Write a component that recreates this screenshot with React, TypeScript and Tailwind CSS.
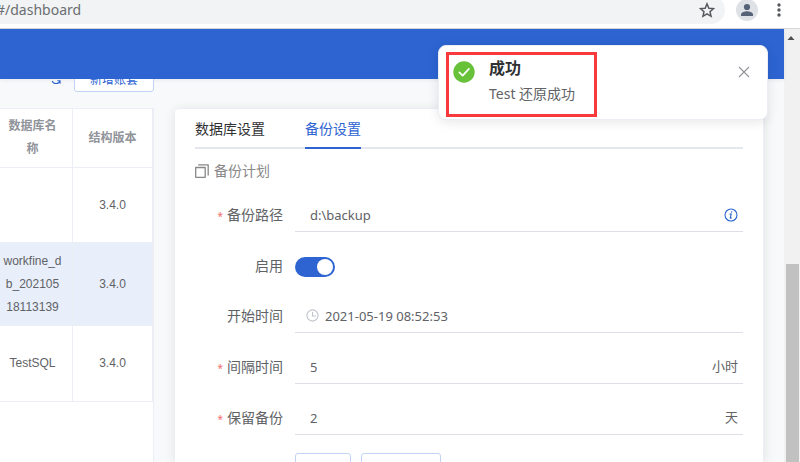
import type { ReactNode } from "react";

const rows = [
  { name: "", version: "3.4.0", rowClass: "h-[75px] bg-white" },
  { name: "workfine_db_20210518113139", version: "3.4.0", rowClass: "h-[83px] bg-[#e8effa]" },
  { name: "TestSQL", version: "3.4.0", rowClass: "h-[76px] bg-white" },
];

const BrowserBar = () => (
  <div className="h-[29px] shrink-0 overflow-hidden border-b border-[#d5d7da] bg-white">
    <div className="-mt-1 flex h-7 items-center">
      <div className="flex h-7 min-w-0 flex-1 items-center justify-between rounded-r-full bg-[#f1f3f4] pr-2.5">
        <span className="-ml-1 text-sm leading-5 text-[#6b6e72]">#/dashboard</span>
        <button aria-label="Bookmark" className="block">
          <svg viewBox="0 0 24 24" className="h-4 w-4" fill="none" stroke="#55585d" strokeWidth="2.2">
            <path d="M12 2.8l2.8 6.5 7 .6-5.3 4.6 1.6 6.9L12 17.700l-6.100 3.700 1.600-6.900L2.200 9.900l7-.6z" />
          </svg>
        </button>
      </div>
      <button aria-label="Profile" className="ml-[11px] h-[22px] w-[22px] rounded-full bg-[#dee1e6]">
        <svg viewBox="0 0 22 22" className="h-[22px] w-[22px]" fill="#566277">
          <circle cx="11" cy="8" r="3.1" />
          <path d="M5 17v-1.500c0-2.300 4-3.300 6-3.300s6 1 6 3.300V17z" />
        </svg>
      </button>
      <button aria-label="Menu" className="mr-[13px] ml-[13px] h-4 w-4">
        <svg viewBox="0 0 16 16" className="h-4 w-4" fill="#55585d">
          <circle cx="8" cy="3" r="1.700" />
          <circle cx="8" cy="8" r="1.700" />
          <circle cx="8" cy="13" r="1.700" />
        </svg>
      </button>
    </div>
  </div>
);

const DatabaseList = () => (
  <div className="flex w-[154px] shrink-0 flex-col">
    {/* toolbar is scrolled partly under the header */}
    <div className="flex h-[13px] shrink-0 items-end justify-end gap-3 overflow-hidden">
      <button aria-label="刷新" className="flex h-[26px] items-center">
        <svg viewBox="0 0 14 14" className="h-3 w-3" fill="none" stroke="#2d64d2" strokeWidth="1.200">
          <path d="M2.200 5a5 5 0 0 1 9.300-.4M11.800 9a5 5 0 0 1-9.300.4M2.200 1.500v3.500h3.200M11.800 12.500V9H8.600" />
        </svg>
      </button>
      <button className="h-[26px] w-20 rounded-[3px] border border-[#c3d3f3] bg-white pt-0.5 text-xs text-[#2d64d2]">
        新增账套
      </button>
    </div>
    <div className="mt-4 flex flex-1 items-start justify-end overflow-hidden border-t border-r border-[#ebeef5] bg-white">
      <table className="w-40 shrink-0 table-fixed border-separate border-spacing-0 text-center font-['Liberation_Sans','Noto_Sans_CJK_SC',sans-serif] text-xs leading-[23px] text-[#606266]">
        <thead>
          <tr className="h-[59px] text-[#909399]">
            <th className="w-20 border-r border-b border-[#ebeef5] px-2.5 font-bold">数据库名称</th>
            <th className="w-20 border-r border-b border-[#ebeef5] px-2.5 font-bold">结构版本</th>
          </tr>
        </thead>
        <tbody>
          {rows.map((row, index) => (
            <tr key={index} className={row.rowClass}>
              <td className="border-r border-b border-[#ebeef5] px-2.5 break-all">{row.name}</td>
              <td className="border-r border-b border-[#ebeef5] px-2.5">{row.version}</td>
            </tr>
          ))}
        </tbody>
      </table>
    </div>
  </div>
);

type FieldProps = {
  id: string;
  label: string;
  value: string;
  required?: boolean;
  prefix?: ReactNode;
  suffix?: ReactNode;
};

const FieldLabel = ({ id, label, required }: { id: string; label: string; required?: boolean }) => (
  <label htmlFor={id} className="w-[88px] shrink-0 text-right text-sm leading-[30px] text-[#606266]">
    {required && <span className="mr-1 text-[10px] text-[#f56c6c]">*</span>}
    {label}
  </label>
);

const Field = ({ id, label, value, required, prefix, suffix }: FieldProps) => (
  <div className="flex h-8 gap-3">
    <FieldLabel id={id} label={label} required={required} />
    <div className="flex min-w-0 flex-1 items-center border-b border-[#dcdfe6] pb-0.5">
      {prefix}
      <input
        id={id}
        defaultValue={value}
        className={`h-full min-w-0 flex-1 bg-transparent text-[13px] text-[#606266] outline-none ${prefix ? "pl-1.5" : "pl-[15px]"}`}
      />
      <span className="pr-[5px] text-[13px] text-[#606266]">{suffix}</span>
    </div>
  </div>
);

const ClockIcon = () => (
  <svg viewBox="0 0 14 14" className="ml-[11px] h-[13px] w-[13px]" fill="none" stroke="#c0c4cc" strokeWidth="1.200">
    <circle cx="7" cy="7" r="6" />
    <path d="M7 3.200v4.300h3.500" />
  </svg>
);

const InfoIcon = () => (
  <svg viewBox="0 0 14 14" className="h-3.5 w-3.5" fill="none" stroke="#2d64d2" strokeWidth="1.100">
    <circle cx="7" cy="7" r="6" />
    <path d="M5.600 6.100h1.600l-.9 3.800c-.1.600.600.600 1.500-.3" />
    <circle cx="7.700" cy="3.900" r=".5" fill="#2d64d2" strokeWidth=".4" />
  </svg>
);

const SettingsPanel = () => (
  <section className="min-w-0 flex-1 self-stretch rounded-t border-t border-r border-[#ebeef5] bg-white px-5 shadow-[0_2px_12px_0_rgba(0,0,0,0.1)]">
    <div role="tablist" className="flex h-10 items-stretch gap-10 border-b-2 border-[#e4e7ed] text-sm">
      <button role="tab" aria-selected="false" className="pt-0.5 text-[#303133]">
        数据库设置
      </button>
      <button role="tab" aria-selected="true" className="-mb-0.5 border-b-2 border-[#2d64d2] pt-0.5 text-[#2d64d2]">
        备份设置
      </button>
    </div>
    <h3 className="mt-3 flex h-5 items-center gap-[5px] text-sm text-[#888888]">
      <svg viewBox="0 0 14 14" className="h-3.5 w-3.5" fill="none" stroke="#888888" strokeWidth="1.300" strokeLinejoin="round">
        <path d="M.7 3.500h9.500v9.800H.7zM3.200.8h10v10.600" />
      </svg>
      备份计划
    </h3>
    <form className="mt-[19px]">
      <div className="flex flex-col gap-[19px]">
        <Field id="path" label="备份路径" value="d:\backup" required suffix={<InfoIcon />} />
        <div className="flex h-[31px] gap-3">
          <FieldLabel id="enabled" label="启用" />
          <input
            id="enabled"
            type="checkbox"
            role="switch"
            defaultChecked
            className="flex h-5 w-10 appearance-none items-center self-center rounded-full bg-[#c0c4cc] px-0.5 before:block before:h-4 before:w-4 before:rounded-full before:bg-white checked:justify-end checked:bg-[#2d64d2]"
          />
        </div>
        <Field id="start" label="开始时间" value="2021-05-19 08:52:53" prefix={<ClockIcon />} />
        <Field id="interval" label="间隔时间" value="5" required suffix="小时" />
        <Field id="keep" label="保留备份" value="2" required suffix="天" />
      </div>
      <div className="mt-[18px] flex gap-2.5 pl-[100px]">
        <button type="button" aria-label="保存" className="h-7 w-14 rounded-[3px] border border-[#c3d3f3] bg-white" />
        <button type="button" aria-label="立即备份" className="h-7 w-20 rounded-[3px] border border-[#c3d3f3] bg-white" />
      </div>
    </form>
  </section>
);

const Notification = () => (
  <div
    role="alert"
    className="absolute top-4 right-4 flex h-[75px] w-[330px] rounded-lg border border-[#ebeef5] bg-white pt-3 pr-[17px] pl-3.5 shadow-[0_2px_12px_0_rgba(0,0,0,0.1)]"
  >
    <svg viewBox="0 0 22 22" className="mt-[3px] h-[22px] w-[22px] shrink-0">
      <circle cx="11" cy="11" r="10.700" fill="#67c23a" />
      <path d="M6.300 11.300l3.400 3.300 6.200-6.700" fill="none" stroke="#ffffff" strokeWidth="1.700" strokeLinecap="round" strokeLinejoin="round" />
    </svg>
    <div className="ml-3.5 min-w-0 flex-1">
      <h2 className="text-base leading-5 font-bold text-[#303133]">成功</h2>
      <p className="mt-1.5 text-sm leading-5 text-[#606266]">Test 还原成功</p>
    </div>
    <button aria-label="关闭" className="mt-2 h-3 w-3">
      <svg viewBox="0 0 12 12" className="h-3 w-3" fill="none" stroke="#909399" strokeWidth="1.100">
        <path d="M1 1l10 10M11 1L1 11" />
      </svg>
    </button>
    <div className="absolute top-1.5 left-[7px] h-[65px] w-[151px] border-3 border-[#f93a3d]" />
  </div>
);

const Scrollbar = () => (
  <div className="flex w-4 shrink-0 flex-col items-end bg-[#f1f1f1] pr-px">
    <svg viewBox="0 0 16 16" className="h-4 w-4 shrink-0" fill="#505050">
      <path d="M4.500 11L8 7l3.500 4z" />
    </svg>
    <div className="h-[219px] shrink-0" />
    <div className="w-[13px] flex-1 bg-[#c1c1c1]" />
  </div>
);

export default function App() {
  return (
    <div className="flex h-screen flex-col overflow-hidden bg-[#f8f9fb] font-['Noto_Sans','Noto_Sans_CJK_SC',sans-serif]">
      <BrowserBar />
      <div className="flex min-h-0 flex-1">
        <div className="relative flex min-w-0 flex-1 flex-col">
          <header className="h-[50px] shrink-0 bg-[#2d64d2] shadow-[0_1px_4px_rgba(0,21,41,0.08)]" />
          <main className="flex min-h-0 flex-1 gap-[21px] overflow-hidden pr-5">
            <DatabaseList />
            <div className="flex min-w-0 flex-1 pt-[29px]">
              <SettingsPanel />
            </div>
          </main>
          <Notification />
        </div>
        <Scrollbar />
      </div>
    </div>
  );
}
